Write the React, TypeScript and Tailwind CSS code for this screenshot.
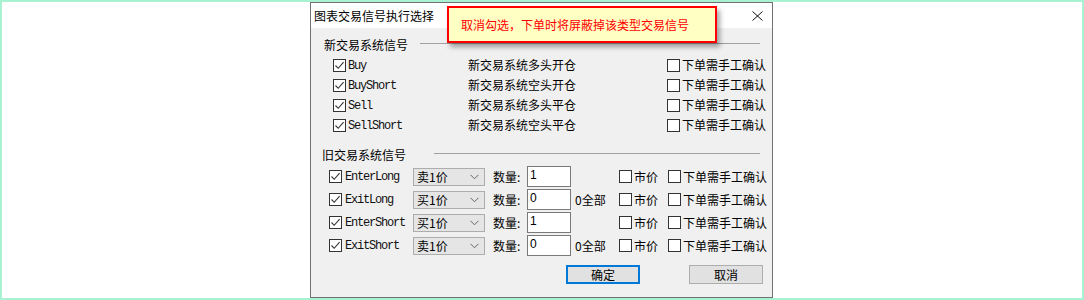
import React from "react";

const CJK = "font-['Noto_Sans_CJK_SC','Noto_Sans',sans-serif]";

function Box({ checked }: { checked?: boolean }) {
  return (
    <span className="w-[13px] h-[13px] border border-[#333333] bg-white flex items-center justify-center shrink-0">
      {checked && (
        <svg width="11" height="11" viewBox="0 0 11 11">
          <path d="M1.5 5.5 L4.2 8.3 L9.6 2.2" stroke="#333333" strokeWidth="1.1" fill="none" />
        </svg>
      )}
    </span>
  );
}

function Mono({ children }: { children: React.ReactNode }) {
  return (
    <span className="font-['Liberation_Mono',monospace] text-[12px] tracking-[-1.2px] text-[#111] leading-none whitespace-nowrap pt-[1px]">
      {children}
    </span>
  );
}

function Confirm() {
  return (
    <div className="flex items-center gap-[2px]">
      <Box />
      <span className="text-[12px] leading-none whitespace-nowrap">下单需手工确认</span>
    </div>
  );
}

function NewRow({ name, desc }: { name: string; desc: string }) {
  return (
    <div className="h-[20px] flex items-center">
      <div className="w-[135px] ml-[22px] flex items-center gap-[2px]">
        <Box checked />
        <Mono>{name}</Mono>
      </div>
      <div className="w-[199px] text-[12px] leading-none whitespace-nowrap">{desc}</div>
      <Confirm />
    </div>
  );
}

function OldRow({ name, price, qty, all }: { name: string; price: string; qty: string; all?: boolean }) {
  return (
    <div className="h-[23px] flex items-center">
      <div className="w-[84px] ml-[18px] flex items-center gap-[3px] shrink-0">
        <Box checked />
        <Mono>{name}</Mono>
      </div>
      <div className="w-[72px] h-[18px] border border-[#adadad] bg-[#e5e5e5] flex items-center justify-between pl-[3px] pr-[5px] shrink-0">
        <span className="text-[12px] leading-none">{price}</span>
        <svg width="9" height="6" viewBox="0 0 9 6">
          <path d="M0.5 0.8 L4.5 4.8 L8.5 0.8" stroke="#666" strokeWidth="1" fill="none" />
        </svg>
      </div>
      <div className="w-[34px] ml-[8px] text-[12px] leading-none whitespace-nowrap shrink-0">数量:</div>
      <div className="w-[44px] h-[21px] border border-[#7a7a7a] bg-white pl-[2px] pt-[2px] text-[12px] leading-[13px] shrink-0 font-['Liberation_Sans',sans-serif]">
        {qty}
      </div>
      <div className="w-[48px] pl-[4px] text-[12px] leading-none whitespace-nowrap shrink-0">{all ? "0全部" : ""}</div>
      <div className="w-[49px] flex items-center gap-[2px] shrink-0">
        <Box />
        <span className="text-[12px] leading-none whitespace-nowrap">市价</span>
      </div>
      <Confirm />
    </div>
  );
}

export default function App() {
  return (
    <div className={`w-[1084px] h-[300px] border-2 border-[#a9f1d3] bg-white relative flex ${CJK} text-black`}>
      <div className="ml-[308px] w-[463px] h-[296px] border border-[#717171] bg-[#f0f0f0] flex flex-col">
        <div className="h-[25px] bg-white flex items-center justify-between pl-[3px] pr-[9px]">
          <span className="text-[12px] leading-none">图表交易信号执行选择</span>
          <svg width="11" height="10" viewBox="0 0 11 10">
            <path d="M0.5 0.5 L10.5 9.5 M10.5 0.5 L0.5 9.5" stroke="#111" strokeWidth="1" fill="none" />
          </svg>
        </div>
        <div className="flex flex-col pt-[9px]">
          <div className="h-[16px] flex items-center">
            <span className="ml-[13px] text-[12px] leading-none whitespace-nowrap">新交易系统信号</span>
            <div className="flex-1 h-px bg-[#a0a0a0] ml-[12px] mr-[12px] mb-[3px]" />
          </div>
          <div className="mt-[2px] flex flex-col">
            <NewRow name="Buy" desc="新交易系统多头开仓" />
            <NewRow name="BuyShort" desc="新交易系统空头开仓" />
            <NewRow name="Sell" desc="新交易系统多头平仓" />
            <NewRow name="SellShort" desc="新交易系统空头平仓" />
          </div>
          <div className="mt-[12px] h-[16px] flex items-center">
            <span className="ml-[11px] text-[12px] leading-none whitespace-nowrap">旧交易系统信号</span>
            <div className="flex-1 h-px bg-[#a0a0a0] ml-[28px] mr-[12px] mb-[3px]" />
          </div>
          <div className="mt-[2px] flex flex-col">
            <OldRow name="EnterLong" price="卖1价" qty="1" />
            <OldRow name="ExitLong" price="买1价" qty="0" all />
            <OldRow name="EnterShort" price="买1价" qty="1" />
            <OldRow name="ExitShort" price="卖1价" qty="0" all />
          </div>
          <div className="mt-[8px] flex">
            <div className="ml-[255px] w-[74px] h-[19px] border-2 border-[#0078d7] bg-[#e1e1e1] flex items-center justify-center text-[12px] leading-none">
              确定
            </div>
            <div className="ml-[49px] w-[74px] h-[19px] border border-[#adadad] bg-[#e1e1e1] flex items-center justify-center text-[12px] leading-none">
              取消
            </div>
          </div>
        </div>
      </div>
      <div className="absolute left-[445px] top-[4px] w-[270px] h-[37px] border-2 border-[#ff0000] bg-[#ffffc4] shadow-[3px_4px_5px_rgba(0,0,0,0.35)] flex items-center pl-[12px]">
        <span className="text-[12px] leading-none text-[#ff0000] whitespace-nowrap">取消勾选，下单时将屏蔽掉该类型交易信号</span>
      </div>
    </div>
  );
}
